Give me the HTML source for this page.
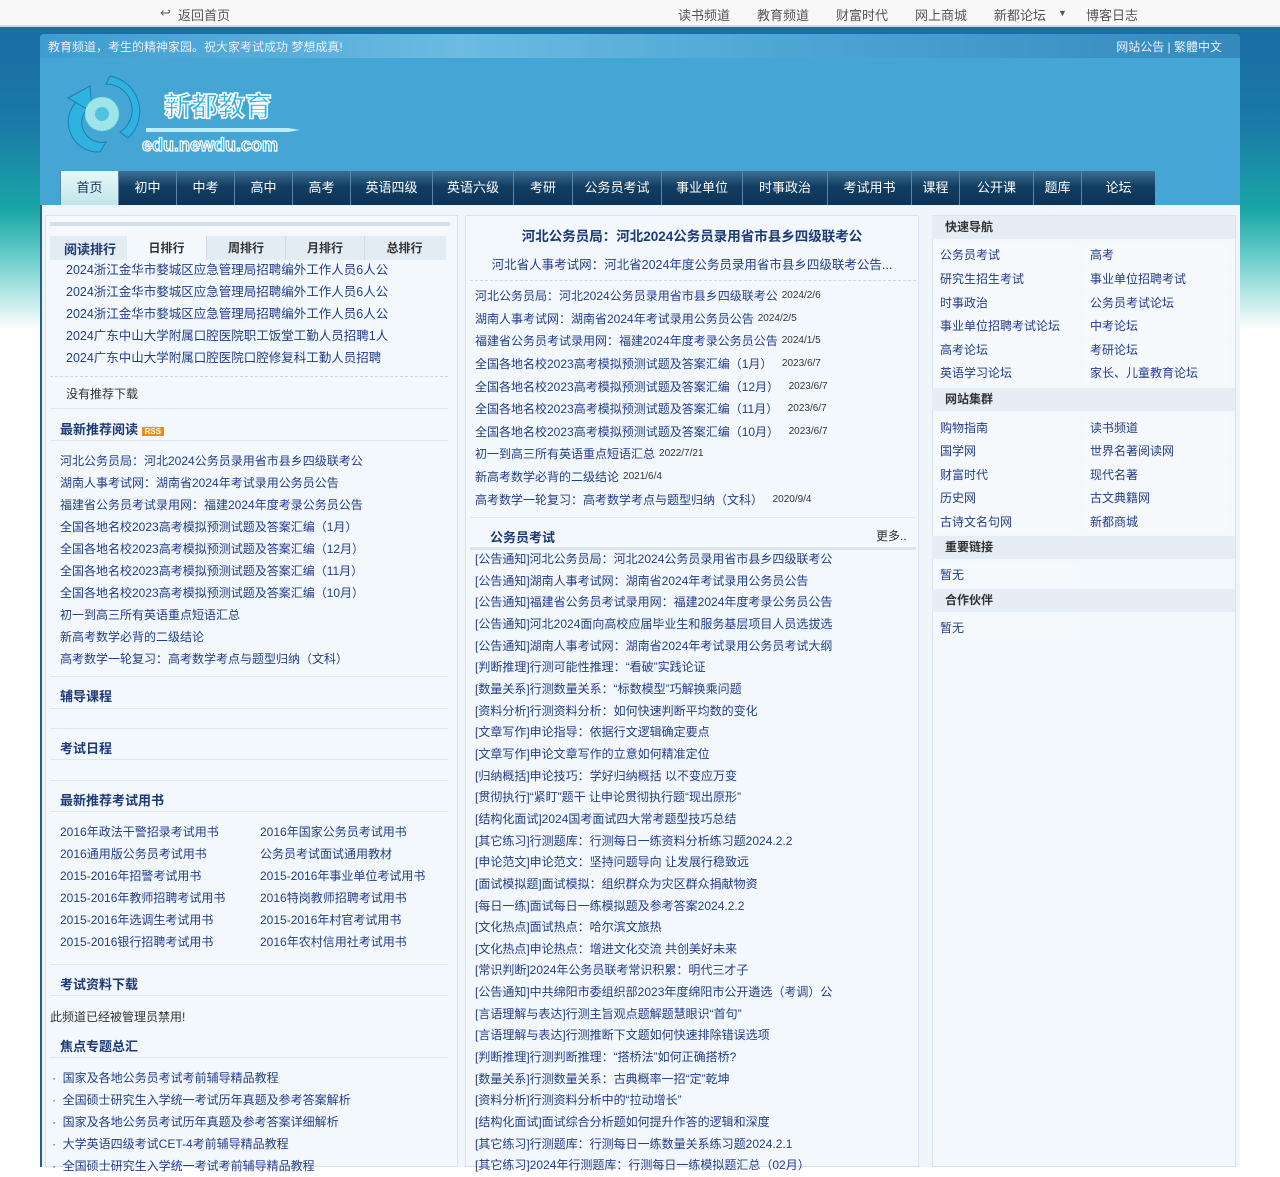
<!DOCTYPE html>
<html style="background:#fff"><head><meta charset="utf-8">
<style>
*{margin:0;padding:0;box-sizing:border-box}
body{width:1280px;height:1167px;overflow:hidden;position:relative;font-family:"Liberation Sans","Noto Sans CJK SC","WenQuanYi Zen Hei",sans-serif;font-size:12px;color:#243d8a;background:#fff}
#bg{position:absolute;left:0;top:0;width:1280px;height:1167px;background:linear-gradient(180deg,#1a6aa5 0px,#1b78a8 120px,#1aa6a6 210px,#6fd0cc 260px,#ffffff 330px,#fff 100%)}
.a{position:absolute}
#top{left:0;top:0;width:1280px;height:27px;background:#f8f8f8;border-bottom:2px solid #c9dbe8;color:#555;font-size:13px}
#top span{position:absolute;top:5px}
#hdr{left:40px;top:34px;width:1200px;height:171px;background:#45a6d6;border-radius:4px 4px 0 0}
#hdr .bar{position:absolute;left:0;top:0;width:1200px;height:24px;background:linear-gradient(90deg,#3d9ccf,#6bbbe2 35%,#4ea8d6 60%,#3589bd);color:#eef;font-size:12px;border-radius:4px 4px 0 0}
.nav{position:absolute;top:171px;height:34px;background:linear-gradient(#3e6f94,#133e63 45%,#0c3357);color:#fff;font-size:13px;text-align:center;line-height:34px;border-left:1px solid #5d87a8}
.nav.on{background:linear-gradient(#e9f8f8,#bfe6ea);color:#16355e}
#main{left:40px;top:205px;width:1200px;height:962px;background:#eef5fb;border-left:2px solid #2a5d87}
.pnl{position:absolute;background:#f3f8fd;border:1px solid #d6e3ef}
.h{position:absolute;font-weight:bold;font-size:13px;color:#1e3a78}
.ln{position:absolute;height:1px;background:#dde8f2}
.list div{white-space:nowrap}
.m div{height:22.65px;line-height:22px}
.d{font-size:10px;color:#333;margin-left:4px;vertical-align:top}
.rt{position:absolute;left:932px;width:303px;height:23px;background:#e6edf4;font-weight:bold;color:#333;padding-left:13px;line-height:23px;font-size:12px}
.rc{position:absolute;width:145px;height:22px;background:#f6f9fc;padding-left:6px;line-height:22px;font-size:12px}
</style></head><body>
<div id="bg"></div>
<div id="top" class="a">
<span style="left:160px;color:#666">↩</span><span style="left:178px">返回首页</span>
<span style="left:678px">读书频道</span><span style="left:757px">教育频道</span><span style="left:836px">财富时代</span><span style="left:915px">网上商城</span><span style="left:994px">新都论坛</span><span style="left:1058px;font-size:9px;top:8px">▼</span><span style="left:1086px">博客日志</span>
</div>
<div id="hdr" class="a">
<div class="bar"><span style="position:absolute;left:8px;top:4px">教育频道，考生的精神家园。祝大家考试成功 梦想成真!</span><span style="position:absolute;right:18px;top:4px">网站公告 | 繁體中文</span></div>
<svg style="position:absolute;left:20px;top:36px" width="250" height="90" viewBox="0 0 250 90">
<path d="M18 30 A30 30 0 0 0 40 82 L46 72 A20 20 0 0 1 28 38 Z" fill="#2fb2e0" stroke="#167fb0"/>
<path d="M8 28 L30 16 L32 42 Z" fill="#2fb2e0" stroke="#167fb0"/>
<path d="M50 6 A36 36 0 0 1 68 68 L60 62 A26 26 0 0 0 46 14 Z" fill="#2fb2e0" stroke="#167fb0"/>
<circle cx="42" cy="44" r="17" fill="#9fe4e8" stroke="#5cc" stroke-dasharray="2 2"/>
<circle cx="42" cy="44" r="7" fill="#4fc4dc"/>
<path d="M86 58 L228 58 L240 60 L228 62 L86 62Z" fill="#bfefff"/>
<text x="104" y="46" font-size="27" font-weight="bold" fill="#2fb2e0" stroke="#fff" stroke-width="1.5" font-family="Noto Sans CJK SC,sans-serif">新都教育</text>
<text x="82" y="81" font-size="18" font-weight="bold" fill="#2fb2e0" stroke="#fff" stroke-width="1.2" font-family="Liberation Sans,sans-serif">edu.newdu.com</text>
</svg>
</div>
<div class="nav on" style="left:60px;width:58px">首页</div>
<div class="nav" style="left:118px;width:58px">初中</div>
<div class="nav" style="left:176px;width:58px">中考</div>
<div class="nav" style="left:234px;width:58px">高中</div>
<div class="nav" style="left:292px;width:58px">高考</div>
<div class="nav" style="left:350px;width:82px">英语四级</div>
<div class="nav" style="left:432px;width:81px">英语六级</div>
<div class="nav" style="left:513px;width:59px">考研</div>
<div class="nav" style="left:572px;width:89px">公务员考试</div>
<div class="nav" style="left:661px;width:81px">事业单位</div>
<div class="nav" style="left:742px;width:85px">时事政治</div>
<div class="nav" style="left:827px;width:84px">考试用书</div>
<div class="nav" style="left:911px;width:48px">课程</div>
<div class="nav" style="left:959px;width:74px">公开课</div>
<div class="nav" style="left:1033px;width:48px">题库</div>
<div class="nav" style="left:1081px;width:74px">论坛</div>

<div id="main" class="a"></div>
<!-- left panel -->
<div class="pnl" style="left:45px;top:215px;width:413px;height:952px"></div>
<div class="a" style="left:50px;top:222px;width:400px;height:4px;background:#d3dfea"></div>
<div class="a" style="left:50px;top:236px;width:396px;height:24px;background:#e3ebf3"></div>
<div class="h" style="left:64px;top:239px">阅读排行</div>
<div class="a" style="left:127px;top:236px;width:79px;height:24px;background:#f3f8fd;text-align:center;line-height:24px;font-weight:bold;color:#333">日排行</div>
<div class="a" style="left:206px;top:236px;width:79px;height:24px;text-align:center;line-height:24px;font-weight:bold;color:#333;border-left:1px solid #d0dbe6">周排行</div>
<div class="a" style="left:285px;top:236px;width:79px;height:24px;text-align:center;line-height:24px;font-weight:bold;color:#333;border-left:1px solid #d0dbe6">月排行</div>
<div class="a" style="left:364px;top:236px;width:80px;height:24px;text-align:center;line-height:24px;font-weight:bold;color:#333;border-left:1px solid #d0dbe6">总排行</div>
<div class="a list" style="left:66px;top:259px;line-height:22px;font-size:12.5px">
<div>2024浙江金华市婺城区应急管理局招聘编外工作人员6人公</div><div>2024浙江金华市婺城区应急管理局招聘编外工作人员6人公</div><div>2024浙江金华市婺城区应急管理局招聘编外工作人员6人公</div><div>2024广东中山大学附属口腔医院职工饭堂工勤人员招聘1人</div><div>2024广东中山大学附属口腔医院口腔修复科工勤人员招聘</div></div>
<div class="a" style="left:50px;top:376px;width:398px;border-top:1px dashed #cdd9e4"></div>
<div class="a" style="left:66px;top:385px;color:#333">没有推荐下载</div>
<div class="ln" style="left:50px;top:408px;width:398px"></div>
<div class="h" style="left:60px;top:419px">最新推荐阅读 <span style="background:#f08a1c;color:#fff;font-size:8px;padding:0 3px">RSS</span></div>
<div class="ln" style="left:50px;top:440px;width:398px"></div>
<div class="a list" style="left:60px;top:450px;line-height:22px">
<div>河北公务员局：河北2024公务员录用省市县乡四级联考公</div><div>湖南人事考试网：湖南省2024年考试录用公务员公告</div><div>福建省公务员考试录用网：福建2024年度考录公务员公告</div><div>全国各地名校2023高考模拟预测试题及答案汇编（1月）</div><div>全国各地名校2023高考模拟预测试题及答案汇编（12月）</div><div>全国各地名校2023高考模拟预测试题及答案汇编（11月）</div><div>全国各地名校2023高考模拟预测试题及答案汇编（10月）</div><div>初一到高三所有英语重点短语汇总</div><div>新高考数学必背的二级结论</div><div>高考数学一轮复习：高考数学考点与题型归纳（文科）</div></div>
<div class="ln" style="left:50px;top:676px;width:398px"></div>
<div class="h" style="left:60px;top:686px">辅导课程</div>
<div class="ln" style="left:50px;top:708px;width:398px"></div>
<div class="ln" style="left:50px;top:728px;width:398px"></div>
<div class="h" style="left:60px;top:738px">考试日程</div>
<div class="ln" style="left:50px;top:759px;width:398px"></div>
<div class="ln" style="left:50px;top:780px;width:398px"></div>
<div class="h" style="left:60px;top:790px">最新推荐考试用书</div>
<div class="ln" style="left:50px;top:811px;width:398px"></div>
<div class="a list" style="left:60px;top:821px;line-height:22px"><div>2016年政法干警招录考试用书</div><div>2016通用版公务员考试用书</div><div>2015-2016年招警考试用书</div><div>2015-2016年教师招聘考试用书</div><div>2015-2016年选调生考试用书</div><div>2015-2016银行招聘考试用书</div></div>
<div class="a list" style="left:260px;top:821px;line-height:22px"><div>2016年国家公务员考试用书</div><div>公务员考试面试通用教材</div><div>2015-2016年事业单位考试用书</div><div>2016特岗教师招聘考试用书</div><div>2015-2016年村官考试用书</div><div>2016年农村信用社考试用书</div></div>
<div class="ln" style="left:50px;top:964px;width:398px"></div>
<div class="h" style="left:60px;top:974px">考试资料下载</div>
<div class="ln" style="left:50px;top:995px;width:398px"></div>
<div class="a" style="left:50px;top:1008px;color:#333">此频道已经被管理员禁用!</div>
<div class="h" style="left:60px;top:1036px">焦点专题总汇</div>
<div class="ln" style="left:50px;top:1057px;width:398px"></div>
<div class="a list" style="left:52px;top:1067px;line-height:22px"><div>·&nbsp; 国家及各地公务员考试考前辅导精品教程</div><div>·&nbsp; 全国硕士研究生入学统一考试历年真题及参考答案解析</div><div>·&nbsp; 国家及各地公务员考试历年真题及参考答案详细解析</div><div>·&nbsp; 大学英语四级考试CET-4考前辅导精品教程</div><div>·&nbsp; 全国硕士研究生入学统一考试考前辅导精品教程</div></div>

<!-- middle panel -->
<div class="pnl" style="left:465px;top:215px;width:454px;height:952px"></div>
<div class="a" style="left:465px;top:225px;width:454px;text-align:center;font-weight:bold;font-size:13.5px;color:#1e3a78">河北公务员局：河北2024公务员录用省市县乡四级联考公</div>
<div class="a" style="left:465px;top:254px;width:454px;text-align:center;font-size:12.5px">河北省人事考试网：河北省2024年度公务员录用省市县乡四级联考公告...</div>
<div class="a" style="left:470px;top:280px;width:446px;border-top:1px dashed #cdd9e4"></div>
<div class="a list m" style="left:475px;top:285px">
<div>河北公务员局：河北2024公务员录用省市县乡四级联考公<span class="d">2024/2/6</span></div>
<div>湖南人事考试网：湖南省2024年考试录用公务员公告<span class="d">2024/2/5</span></div>
<div>福建省公务员考试录用网：福建2024年度考录公务员公告<span class="d">2024/1/5</span></div>
<div>全国各地名校2023高考模拟预测试题及答案汇编（1月）<span class="d">&nbsp; 2023/6/7</span></div>
<div>全国各地名校2023高考模拟预测试题及答案汇编（12月）<span class="d">&nbsp; 2023/6/7</span></div>
<div>全国各地名校2023高考模拟预测试题及答案汇编（11月）<span class="d">&nbsp; 2023/6/7</span></div>
<div>全国各地名校2023高考模拟预测试题及答案汇编（10月）<span class="d">&nbsp; 2023/6/7</span></div>
<div>初一到高三所有英语重点短语汇总<span class="d">2022/7/21</span></div>
<div>新高考数学必背的二级结论<span class="d">2021/6/4</span></div>
<div>高考数学一轮复习：高考数学考点与题型归纳（文科）<span class="d">&nbsp; 2020/9/4</span></div></div>
<div class="ln" style="left:470px;top:517px;width:446px"></div>
<div class="h" style="left:490px;top:527px">公务员考试</div>
<div class="a" style="left:876px;top:527px;color:#333">更多..</div>
<div class="a" style="left:470px;top:547px;width:446px;height:3px;background:#dbe5ee"></div>
<div class="a list" style="left:475px;top:549px;line-height:21.65px">
<div>[公告通知]河北公务员局：河北2024公务员录用省市县乡四级联考公</div>
<div>[公告通知]湖南人事考试网：湖南省2024年考试录用公务员公告</div>
<div>[公告通知]福建省公务员考试录用网：福建2024年度考录公务员公告</div>
<div>[公告通知]河北2024面向高校应届毕业生和服务基层项目人员选拔选</div>
<div>[公告通知]湖南人事考试网：湖南省2024年考试录用公务员考试大纲</div>
<div>[判断推理]行测可能性推理：“看破”实践论证</div>
<div>[数量关系]行测数量关系：“标数模型”巧解换乘问题</div>
<div>[资料分析]行测资料分析：如何快速判断平均数的变化</div>
<div>[文章写作]申论指导：依据行文逻辑确定要点</div>
<div>[文章写作]申论文章写作的立意如何精准定位</div>
<div>[归纳概括]申论技巧：学好归纳概括 以不变应万变</div>
<div>[贯彻执行]“紧盯”题干 让申论贯彻执行题“现出原形”</div>
<div>[结构化面试]2024国考面试四大常考题型技巧总结</div>
<div>[其它练习]行测题库：行测每日一练资料分析练习题2024.2.2</div>
<div>[申论范文]申论范文：坚持问题导向 让发展行稳致远</div>
<div>[面试模拟题]面试模拟：组织群众为灾区群众捐献物资</div>
<div>[每日一练]面试每日一练模拟题及参考答案2024.2.2</div>
<div>[文化热点]面试热点：哈尔滨文旅热</div>
<div>[文化热点]申论热点：增进文化交流 共创美好未来</div>
<div>[常识判断]2024年公务员联考常识积累：明代三才子</div>
<div>[公告通知]中共绵阳市委组织部2023年度绵阳市公开遴选（考调）公</div>
<div>[言语理解与表达]行测主旨观点题解题慧眼识“首句”</div>
<div>[言语理解与表达]行测推断下文题如何快速排除错误选项</div>
<div>[判断推理]行测判断推理：“搭桥法”如何正确搭桥?</div>
<div>[数量关系]行测数量关系：古典概率一招“定”乾坤</div>
<div>[资料分析]行测资料分析中的“拉动增长”</div>
<div>[结构化面试]面试综合分析题如何提升作答的逻辑和深度</div>
<div>[其它练习]行测题库：行测每日一练数量关系练习题2024.2.1</div>
<div>[其它练习]2024年行测题库：行测每日一练模拟题汇总（02月）</div></div>

<!-- right -->
<div class="pnl" style="left:932px;top:215px;width:304px;height:952px"></div>
<div class="rt" style="top:216px">快速导航</div>
<div class="rc" style="left:934px;top:244px">公务员考试</div><div class="rc" style="left:1084px;top:244px">高考</div>
<div class="rc" style="left:934px;top:268px">研究生招生考试</div><div class="rc" style="left:1084px;top:268px">事业单位招聘考试</div>
<div class="rc" style="left:934px;top:292px">时事政治</div><div class="rc" style="left:1084px;top:292px">公务员考试论坛</div>
<div class="rc" style="left:934px;top:315px">事业单位招聘考试论坛</div><div class="rc" style="left:1084px;top:315px">中考论坛</div>
<div class="rc" style="left:934px;top:339px">高考论坛</div><div class="rc" style="left:1084px;top:339px">考研论坛</div>
<div class="rc" style="left:934px;top:362px">英语学习论坛</div><div class="rc" style="left:1084px;top:362px">家长、儿童教育论坛</div>
<div class="rt" style="top:388px">网站集群</div>
<div class="rc" style="left:934px;top:417px">购物指南</div><div class="rc" style="left:1084px;top:417px">读书频道</div>
<div class="rc" style="left:934px;top:440px">国学网</div><div class="rc" style="left:1084px;top:440px">世界名著阅读网</div>
<div class="rc" style="left:934px;top:464px">财富时代</div><div class="rc" style="left:1084px;top:464px">现代名著</div>
<div class="rc" style="left:934px;top:487px">历史网</div><div class="rc" style="left:1084px;top:487px">古文典籍网</div>
<div class="rc" style="left:934px;top:511px">古诗文名句网</div><div class="rc" style="left:1084px;top:511px">新都商城</div>
<div class="rt" style="top:536px">重要链接</div>
<div class="rc" style="left:934px;top:564px">暂无</div>
<div class="rt" style="top:589px">合作伙伴</div>
<div class="rc" style="left:934px;top:617px">暂无</div>
</body></html>
